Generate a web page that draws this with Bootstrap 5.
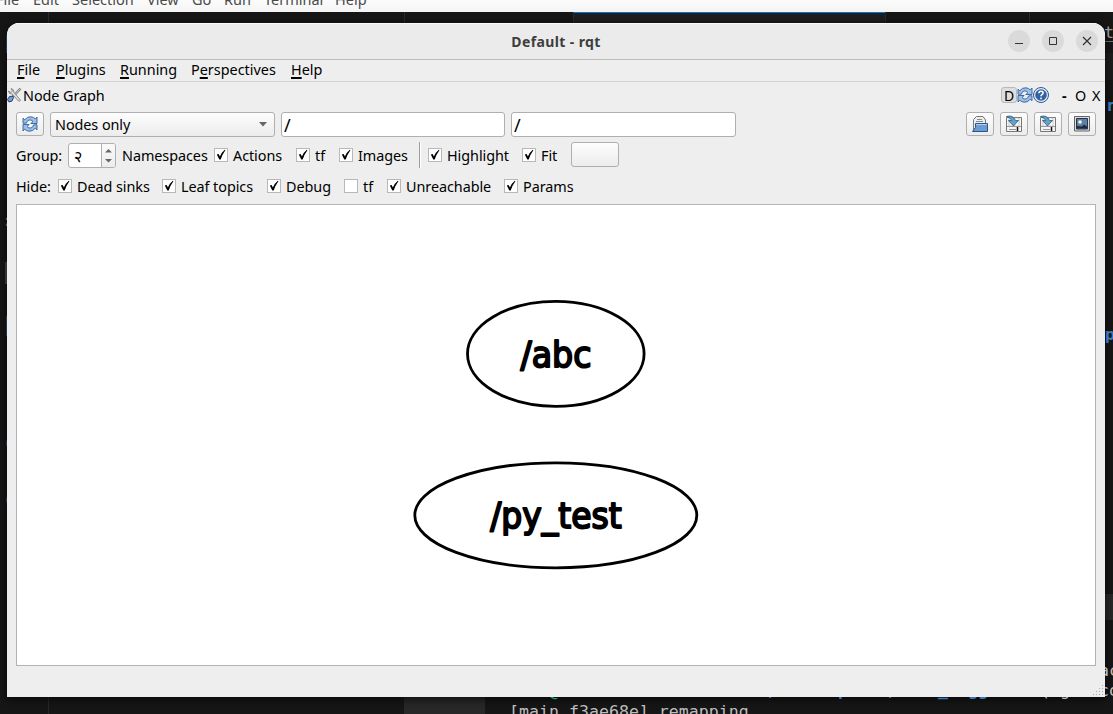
<!DOCTYPE html>
<html lang="en">
<head>
<meta charset="utf-8">
<title>Default - rqt</title>
<link href="https://cdn.jsdelivr.net/npm/bootstrap@5.3.0/dist/css/bootstrap.min.css" rel="stylesheet">
<style>
body{width:1113px;height:714px;overflow:hidden;background:#161616;font-family:"Noto Sans","Open Sans",sans-serif;font-size:14.4px;line-height:20px;color:#000}
.editor-menu{height:12px;background:linear-gradient(#fcfcfc,#f4f4f4);color:#4a4a4a;position:relative;overflow:hidden}
.editor-menu span{position:absolute;top:-11px;font-size:14.5px;white-space:nowrap}
.tabs-strip{height:11px;padding-left:48px}
.tabs-strip div{border-left:1px solid #2b2b2b}
.tab-a{width:356px}.tab-b{width:169px}
.tab-c{width:312px;background:#1e1e1e;border-top:1px solid #0078d4}
.tab-d{width:144px}.tab-e{width:84px}
.behind{position:absolute;font:16.6px/20px "DejaVu Sans Mono",monospace;white-space:pre;color:#bdbdbd}
.behind.blue{color:#3978bd;font-weight:bold}
.slab{position:absolute;background:#282828}
.app-window{position:relative;width:1098px;height:674px;margin-left:7px;background:#eee;border-radius:12px 12px 0 0;overflow:hidden}
.shade{position:absolute;left:7px;top:23px;width:1098px;height:674px;border-radius:12px 12px 0 0;box-shadow:0 2px 9px 1px #0009}
.title-bar{height:37px;background:#ebebeb;border-top:1px solid #fafafa;border-bottom:1px solid #bdbdbd;position:relative}
.title-bar b{color:#3d3d3d;font-size:14px;font-weight:700;letter-spacing:.38px}
.win-btns{position:absolute;right:7px;top:6px;gap:12px}
.win-btns svg{display:block}
.menus{height:22px;border-bottom:1px solid #d4d4d4;padding:0 0 1px 10px}
.menus span,.fx{white-space:nowrap;flex:none;display:block}
.menus span{margin-right:15px}
.dock-title .fx,.bar-two .fx,.bar-three .fx{padding-top:2px}
.fx{letter-spacing:-.06px}
u{text-decoration-thickness:2px;text-underline-offset:2px;text-decoration-skip-ink:none}
.dock-title{height:28px;padding-bottom:2px}
.letter{width:16px;height:16px;border:1px solid #b9b9b9;border-radius:3px;background:#dedede;line-height:15px;text-align:center;font-size:14px}
.tool{border:1px solid #afafaf;border-radius:3px;background:linear-gradient(#fdfdfd,#ececec)}
.sq{width:28px;height:24px}
.bar-one{height:25px;padding:0 9px;gap:6px;margin-top:2px}
.combo{width:225px;height:25px;padding:0 7px 0 4px}
.entry{width:224px;height:25px;background:#fff;border:1px solid #afafaf;border-radius:3px;padding-left:2px;line-height:24px;font-size:18px}
.entry+.entry{width:225px}
.bar-two{height:27px;margin-top:4px;padding-left:9px}
.bar-three{height:27px;margin-top:4px;padding-left:9px}
.spin{width:48px;height:25px;background:#fff;border:1px solid #afafaf;border-radius:3px;overflow:hidden;padding-left:5px;margin-top:2px}
.spin .arrows{width:14px;height:23px;border-left:1px solid #afafaf;background:linear-gradient(#fafafa,#ededed)}
.spin .value{font-size:16px}
.cb{width:14px;height:14px;flex:none;border:1px solid #b8b8b8;background:#fff;margin-right:5px}
.cb svg{display:block}
.sep{width:2px;height:26px;border-left:1px solid #9c9c9c;border-right:1px solid #fff}
.canvas{width:1080px;height:462px;margin:5px 0 0 9px;border:1px solid #b4b4b4;background:#fff}
.w1{width:24px}.w2{width:49px}.w3{width:56px}.w4{width:85px}.w5{width:31px}
.grip{position:absolute;right:1px;bottom:1px}
.n63{width:63px}.n24{width:24px}.n61{width:61px}.n75{width:75px}.n30{width:30px}
.n85{width:85px}.n86{width:86px}.n58{width:58px}.n98{width:98px}
</style>
</head>
<body>
<div class="editor-menu"><span style="left:-4px">File</span><span style="left:33px">Edit</span><span style="left:72px">Selection</span><span style="left:147px">View</span><span style="left:192px">Go</span><span style="left:224px">Run</span><span style="left:264px">Terminal</span><span style="left:335px">Help</span></div>
<div class="tabs-strip d-flex"><div class="tab-a"></div><div class="tab-b"></div><div class="tab-c"></div><div class="tab-d"></div><div class="tab-e"></div></div>

<div class="slab" style="left:404px;top:697px;width:81px;height:17px"></div>
<div class="slab" style="left:1105px;top:594px;width:8px;height:26px"></div>
<div class="slab" style="left:1105px;top:41px;width:8px;height:1px;background:#777"></div>
<div class="slab" style="left:1105px;top:53px;width:8px;height:27px;background:#1d1d1d"></div>
<div class="slab" style="left:48px;top:697px;width:1px;height:17px"></div>
<div class="shade"></div>
<div class="slab" style="left:5px;top:262px;width:2px;height:22px;background:#333"></div>
<div class="slab" style="left:6px;top:316px;width:1px;height:20px;background:#1d3a58"></div>
<div class="slab" style="left:6px;top:35px;width:1px;height:18px;background:#153a66"></div>
<div class="behind" style="left:2px;top:211px;color:#55606a">:</div>
<div class="behind" style="left:3px;top:433px;color:#555">(</div>
<div class="behind" style="left:3px;top:490px;color:#555">(</div>
<div class="behind" style="left:1104px;top:23px;color:#999">t</div>
<div class="behind blue" style="left:1106px;top:96px">r</div>
<div class="behind blue" style="left:1105px;top:325px">p</div>
<div class="behind" style="left:1099px;top:661px">ac</div>
<div class="behind" style="left:1099px;top:681px">co</div>
<div class="behind" style="left:549px;top:682px;color:#17a673">@</div>
<div class="behind blue" style="left:768px;top:682px">/</div>
<div class="behind blue" style="left:838px;top:681px">p</div>
<div class="behind blue" style="left:888px;top:682px">/</div>
<div class="behind blue" style="left:938px;top:681px">_  gg</div>
<div class="behind" style="left:1040px;top:681px">( g</div>
<div class="behind" style="left:509px;top:702px">[main f3ae68e] remapping</div>

<svg class="d-none">
  <symbol id="sync" viewBox="0 0 16 16">
    <path d="M1 7.200V2.200L2.800 3.800Q5.300.4 9 .8q2.800.3 4.200 2L15 1V7.500H8.800l2.200-2Q9.200 3.400 7 4 5 4.700 4.300 7.200Z" fill="#9fc0e4" stroke="#2f5f9f" stroke-width=".9"/>
    <path d="M15 8.800v5L13.200 12.200Q10.700 15.600 7 15.200q-2.800-.3-4.200-2L1 15V8.500H7.200l-2.200 2q1.800 2.100 4 1.500 2-.7 2.700-3.200Z" fill="#9fc0e4" stroke="#2f5f9f" stroke-width=".9"/>
  </symbol>
  <symbol id="save" viewBox="0 0 18 18">
    <path d="M1.500 2.500h15v14h-15z" fill="#f4f4f4" stroke="#777"/><path d="M4 3h10v8H4z" fill="#fff" stroke="#aaa" stroke-width=".6"/><path d="M2 11.500h14M4 14.500h7" stroke="#999"/><path d="M12.500 12v4" stroke="#111" stroke-width="1.500"/>
    <path d="M1.500 1.500Q8-.5 10.500 5.500H13.500L8.500 11 3.500 5.500h3.200Q5.500 2.500 1.500 1.500Z" fill="#65a0c8" stroke="#245a82" stroke-width=".8"/>
  </symbol>
  <symbol id="tick" viewBox="0 0 12 12"><path d="M1.800 5.500 3.700 5l1.200 2.400Q6.700 3.300 9.800.8l.6.500Q7.300 5.500 5.700 10.500H4.300Z" fill="#000"/></symbol>
</svg>

<div class="app-window">
  <div class="title-bar d-flex align-items-center justify-content-center"><b>Default - rqt</b>
    <div class="win-btns d-flex">
      <svg width="22" height="22"><circle cx="11" cy="11" r="11" fill="#dadada"/><path d="M7 13.500h8" stroke="#333"/></svg>
      <svg width="22" height="22"><circle cx="11" cy="11" r="11" fill="#dadada"/><path d="M7.500 7.500h7v7h-7z" fill="none" stroke="#333"/></svg>
      <svg width="22" height="22"><circle cx="11" cy="11" r="11" fill="#dadada"/><path d="m7 7 8 8m0-8-8 8" stroke="#333" stroke-width="1.200"/></svg>
    </div>
  </div>
  <div class="menus d-flex align-items-center"><span class="w1"><u>F</u>ile</span><span class="w2"><u>P</u>lugins</span><span class="w3"><u>R</u>unning</span><span class="w4">P<u>e</u>rspectives</span><span class="w5"><u>H</u>elp</span></div>
  <div class="dock-title d-flex align-items-center">
    <svg width="16" height="16" viewBox="0 0 16 16"><path d="M13.500 1.500 6 9.500" stroke="#777" stroke-width="2.400"/><path d="M13.500 1.500 6 9.500" stroke="#eee" stroke-width=".8"/><path d="M4 1.500 5.500 4 4 5.500 1.500 4Q1.500 7 5 7l6.500 7q1.500.8 2-1L7 5.500Q7 2 4 1.500Z" fill="#ddd" stroke="#777" stroke-width=".8"/><path d="M6 9.200 2.500 9.500.5 12.500l1.500 2.500 3-1 1.500-3.500Z" fill="#7c9dcc" stroke="#1c427c"/></svg>
    <span class="fx">Node Graph</span>
    <div class="ms-auto d-flex align-items-center">
      <span class="letter">D</span><svg width="16" height="16"><use href="#sync"/></svg>
      <svg width="16" height="16"><circle cx="8" cy="8" r="7.500" fill="#e6edf6" stroke="#2b5a9a"/><circle cx="8" cy="8" r="5.800" fill="#34629f"/><path d="M5.800 6.200Q6 4.200 8 4.200t2.100 1.700Q10.100 7 8.900 7.600 8 8.200 8 9.300M8 10.600v1.600" fill="none" stroke="#fff" stroke-width="1.500"/></svg>
      <span class="fx fw-bold" style="width:26px;padding-left:13px">-</span><span class="fx" style="width:17px">O</span><span class="fx" style="width:13px">X</span>
    </div>
  </div>
  <div class="bar-one d-flex">
    <div class="tool sq d-flex align-items-center justify-content-center"><svg width="16" height="16"><use href="#sync"/></svg></div>
    <div class="tool combo d-flex align-items-center"><span class="fx">Nodes only</span><svg class="ms-auto" width="8" height="5"><path d="M0 0h8L4 4.500Z" fill="#666"/></svg></div>
    <div class="entry">/</div><div class="entry">/</div>
    <div class="ms-auto d-flex" style="gap:6px">
      <div class="tool sq d-flex align-items-center justify-content-center"><svg width="18" height="18" viewBox="0 0 18 18"><path d="M2.500 15V4.500L5.500 1.500H12L14.500 5v9" fill="#eee" stroke="#777"/><path d="M6 4.500h5M5 6.500h7" stroke="#888"/><path d="M1.500 16.500 4.500 12.500V8.500H16.500V16.500Z" fill="#6b9bd2" stroke="#27558c"/><path d="M5 9.500h11" stroke="#b5d0ef"/></svg></div>
      <div class="tool sq d-flex align-items-center justify-content-center"><svg width="18" height="18"><use href="#save"/></svg></div>
      <div class="tool sq d-flex align-items-center justify-content-center"><svg width="18" height="18"><use href="#save"/></svg></div>
      <div class="tool sq d-flex align-items-center justify-content-center"><svg width="16" height="16" viewBox="0 0 16 16"><path d="M.5.500h15v14.500H.5z" fill="#ddd" stroke="#666"/><path d="M2.500 2.500h11v10.500h-11z" fill="#5c7fab" stroke="#26354c"/><path d="M3 12.500V10l5 .5 2-2 3 2v2Z" fill="#1f2b3b"/><circle cx="6" cy="6" r="1.800" fill="#ffffc4"/></svg></div>
    </div>
  </div>
  <div class="bar-two d-flex align-items-center">
    <span class="fx" style="width:52px">Group:</span>
    <div class="spin d-flex align-items-center"><span class="value">२</span><div class="arrows ms-auto"><svg class="d-block" width="13" height="23"><path d="M3 8.500h7L6.500 5ZM3 15h7L6.500 18.500Z" fill="#666"/></svg></div></div>
    <span class="fx" style="width:92px;margin-left:6px">Namespaces</span>
    <span class="cb"><svg width="12" height="12"><use href="#tick"/></svg></span><span class="fx n63">Actions</span>
    <span class="cb"><svg width="12" height="12"><use href="#tick"/></svg></span><span class="fx n24">tf</span>
    <span class="cb"><svg width="12" height="12"><use href="#tick"/></svg></span><span class="fx n61">Images</span>
    <span class="sep"></span>
    <span class="cb" style="margin-left:7px"><svg width="12" height="12"><use href="#tick"/></svg></span><span class="fx n75">Highlight</span>
    <span class="cb"><svg width="12" height="12"><use href="#tick"/></svg></span><span class="fx n30">Fit</span>
    <div class="tool" style="width:48px;height:25px"></div>
  </div>
  <div class="bar-three d-flex align-items-center">
    <span class="fx" style="width:42px">Hide:</span>
    <span class="cb"><svg width="12" height="12"><use href="#tick"/></svg></span><span class="fx n85">Dead sinks</span>
    <span class="cb"><svg width="12" height="12"><use href="#tick"/></svg></span><span class="fx n86">Leaf topics</span>
    <span class="cb"><svg width="12" height="12"><use href="#tick"/></svg></span><span class="fx n58">Debug</span>
    <span class="cb"></span><span class="fx n24">tf</span>
    <span class="cb"><svg width="12" height="12"><use href="#tick"/></svg></span><span class="fx n98">Unreachable</span>
    <span class="cb"><svg width="12" height="12"><use href="#tick"/></svg></span><span class="fx">Params</span>
  </div>
  <div class="canvas">
    <svg class="d-block" width="1078" height="460" viewBox="17 205 1078 460" font-family="DejaVu Sans, sans-serif" font-size="35.500" text-anchor="middle">
      <g fill="none" stroke="#000" stroke-width="2.800"><ellipse cx="555.800" cy="353.800" rx="88.300" ry="52.500"/><ellipse cx="555.800" cy="515.300" rx="141" ry="52.500"/></g>
      <g stroke="#000" stroke-width="2" stroke-linejoin="round"><text x="556" y="366.500" textLength="71" lengthAdjust="spacingAndGlyphs">/abc</text><text x="556" y="528" textLength="131.500" lengthAdjust="spacingAndGlyphs">/py_test</text></g>
    </svg>
  </div>
  <svg class="grip" width="12" height="12" fill="#aaa"><path d="M10 1h1v1h-1zM10 4h1v1h-1zM7 4h1v1H7zM10 7h1v1h-1zM7 7h1v1H7zM4 7h1v1H4zM10 10h1v1h-1zM7 10h1v1H7zM4 10h1v1H4zM1 10h1v1H1z"/></svg>
</div>
<script src="https://cdn.jsdelivr.net/npm/bootstrap@5.3.0/dist/js/bootstrap.bundle.min.js"></script>
</body>
</html>
